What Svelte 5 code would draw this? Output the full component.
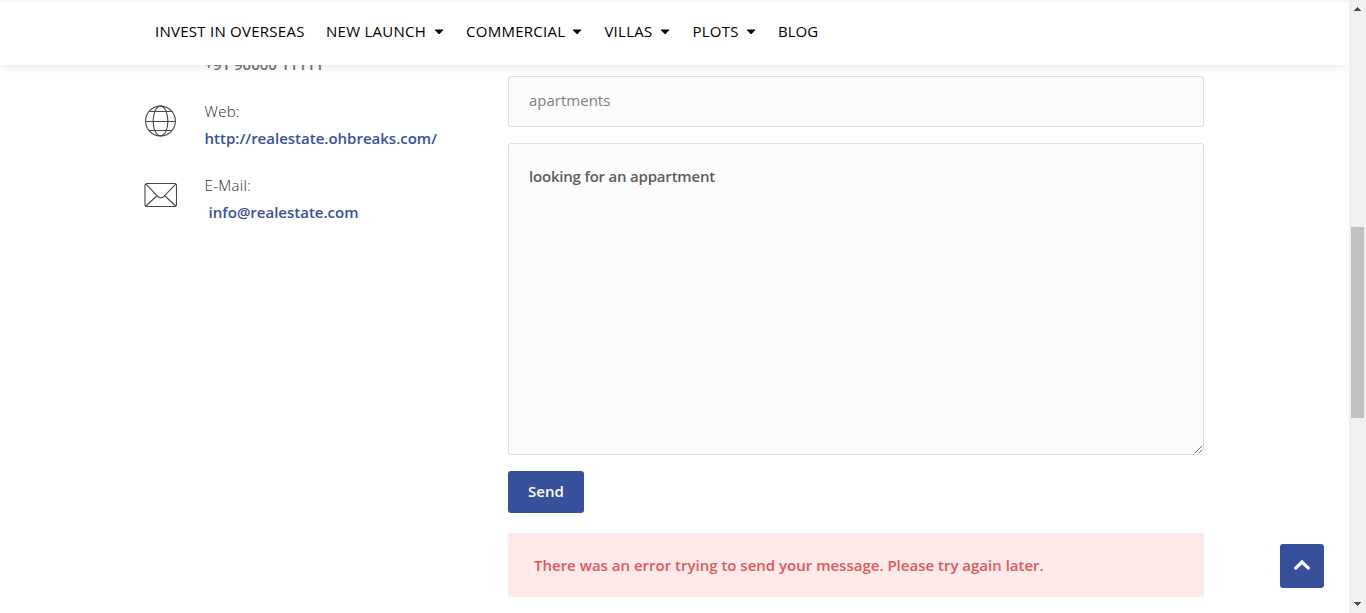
<script>
  const links = [
    { label: 'INVEST IN OVERSEAS', menu: false, width: 149 },
    { label: 'NEW LAUNCH', menu: true, width: 118 },
    { label: 'COMMERCIAL', menu: true, width: 116.4 },
    { label: 'VILLAS', menu: true, width: 66 },
    { label: 'PLOTS', menu: true, width: 63.6 },
    { label: 'BLOG', menu: false, width: 41 }
  ];
  let subject = $state('apartments');
  let message = $state('looking for an appartment');
</script>

<div class="page">
  <div class="view">
    <header>
      <nav>
        {#each links as link}
          <a href="#top" style:width="{link.width}px">
            <span class:wide={link.label.length > 4}>{link.label}</span>
            {#if link.menu}
              <svg width="10" height="6" viewBox="0 0 10 6"><path d="M1.4 .5h7.4q.8.1.3.8L5.6 4.9q-.5.4-1 0L1.1 1.3Q.6.6 1.4 .5z" /></svg>
            {/if}
          </a>
        {/each}
      </nav>
    </header>

    <main>
      <aside>
        <p class="phone">+91 90000 11111</p>
        <div class="item">
          <svg class="globe" width="32" height="32" viewBox="0 0 32 32">
            <circle cx="16.5" cy="16" r="14.9" />
            <ellipse cx="16.5" cy="16" rx="7.4" ry="14.9" />
            <path d="M1.5 16.5h30M5 6.5h23M5 25.5h23" />
          </svg>
          <div><span>Web:</span><a href="#web">http://realestate.ohbreaks.com/</a></div>
        </div>
        <div class="item">
          <svg class="mail" width="34" height="26" viewBox="0 0 34 26">
            <rect x="1" y="1.5" width="31.5" height="23" rx="2" />
            <path d="M2 2.2l11.2 11.6q3.6 4.2 7.2 0L31.7 2.2M2 24l10.6-10M31.7 24L21 14" />
          </svg>
          <div><span>E-Mail:</span><a class="email" href="#mail">info@realestate.com</a></div>
        </div>
      </aside>

      <form onsubmit={(e) => e.preventDefault()}>
        <input type="text" aria-label="Subject" bind:value={subject} />
        <textarea aria-label="Message" spellcheck="false" bind:value={message}></textarea>
        <button type="submit">Send</button>
        <p class="error">There was an error trying to send your message. Please try again later.</p>
      </form>
    </main>

    <a class="to-top" href="#top" aria-label="Back to top">
      <svg width="18" height="12" viewBox="0 0 18 12"><path d="M2.7 8.1L9 2l6.3 6.1" /></svg>
    </a>
  </div>

  <div class="scrollbar">
    <svg width="7" height="4" viewBox="0 0 7 4" shape-rendering="crispEdges"><path d="M3 0h1v1h1v1h1v1h1v1H0V3h1V2h1V1h1z" /></svg>
    <div class="thumb"></div>
    <svg class="down" width="7" height="4" viewBox="0 0 7 4" shape-rendering="crispEdges"><path d="M0 0h7v1H6v1H5v1H4v1H3V3H2V2H1V1H0z" /></svg>
  </div>
</div>

<style>
  .page {
    display: grid;
    grid-template-columns: 1fr 17px;
    height: 613px;
    overflow: hidden;
    background: #fff;
    font-family: "Open Sans", sans-serif;
    font-size: 15px;
  }
  .page * { box-sizing: border-box; }
  a { text-decoration: none; }
  p { margin: 0; }
  .view { position: relative; overflow: hidden; }
  header {
    position: absolute;
    z-index: 2;
    top: 0;
    left: 0;
    right: 0;
    height: 65px;
    border-top: 2px solid #f7f7f7;
    background: #fff;
    box-shadow: 0 0 10px rgba(0, 0, 0, .12);
  }
  nav { display: flex; gap: 22px; padding: 16px 0 0 155px; }
  nav a {
    display: flex;
    flex: none;
    justify-content: space-between;
    align-items: center;
    color: #000;
    line-height: 27px;
    white-space: nowrap;
  }
  nav svg { fill: #000; }
  .wide { letter-spacing: .26px; }
  main {
    display: grid;
    grid-template-columns: 364px 696px;
    padding: 51px 0 0 144px;
  }
  .phone {
    padding-left: 60.4px;
    line-height: 27px;
    font-weight: 600;
    color: #707070;
  }
  .item {
    display: flex;
    height: 54px;
    margin-top: 20px;
    line-height: 27px;
  }
  .item svg { flex: none; fill: none; stroke: #484848; stroke-width: 1.1; }
  .globe { margin: 7px 28.6px 0 0; }
  .mail { margin: 10px 26.6px 0 0; }
  .item span, .item a { display: block; }
  .item span { color: #2c2c2c; font-weight: 300; letter-spacing: .3px; }
  .item a { color: #36509c; font-weight: 600; }
  .item .email { padding-left: 4px; }
  form { display: flex; flex-direction: column; align-items: flex-start; padding-top: 25px; }
  input, textarea {
    width: 696px;
    margin: 0;
    border: 1px solid #dfdfdf;
    border-radius: 3px;
    background: #fcfcfc;
    outline: none;
  }
  input {
    height: 51px;
    padding: 0 20px 3px;
    color: #808080;
    font: 15px "Open Sans", sans-serif;
  }
  textarea {
    height: 312px;
    margin-top: 16px;
    padding: 19px 20px;
    color: #5c5c5c;
    font: 600 15px/27px "Open Sans", sans-serif;
    letter-spacing: -.2px;
    resize: both;
  }
  button {
    width: 76px;
    height: 42px;
    margin-top: 16px;
    padding: 0 0 2px;
    border: 0;
    border-radius: 3px;
    background: #36509c;
    color: #fff;
    font: 600 15px "Open Sans", sans-serif;
  }
  .error {
    width: 696px;
    height: 64px;
    margin-top: 20px;
    padding: 19px 26px;
    border-radius: 3px;
    background: #ffe9e9;
    color: #de5959;
    font-weight: 600;
    line-height: 27px;
  }
  .to-top {
    position: absolute;
    right: 25px;
    bottom: 25px;
    display: grid;
    place-items: center;
    width: 44px;
    height: 44px;
    border-radius: 3px;
    background: #36509c;
  }
  .to-top svg { fill: none; stroke: #fff; stroke-width: 3.2; stroke-linecap: round; }
  .scrollbar {
    display: flex;
    flex-direction: column;
    align-items: center;
    height: 613px;
    padding: 7px 0;
    background: #f0f0f0;
  }
  .scrollbar svg { flex: none; fill: #505050; }
  .thumb { width: 13px; height: 191px; margin-top: 216px; background: #c1c1c1; }
  .down { margin-top: auto; }
</style>
